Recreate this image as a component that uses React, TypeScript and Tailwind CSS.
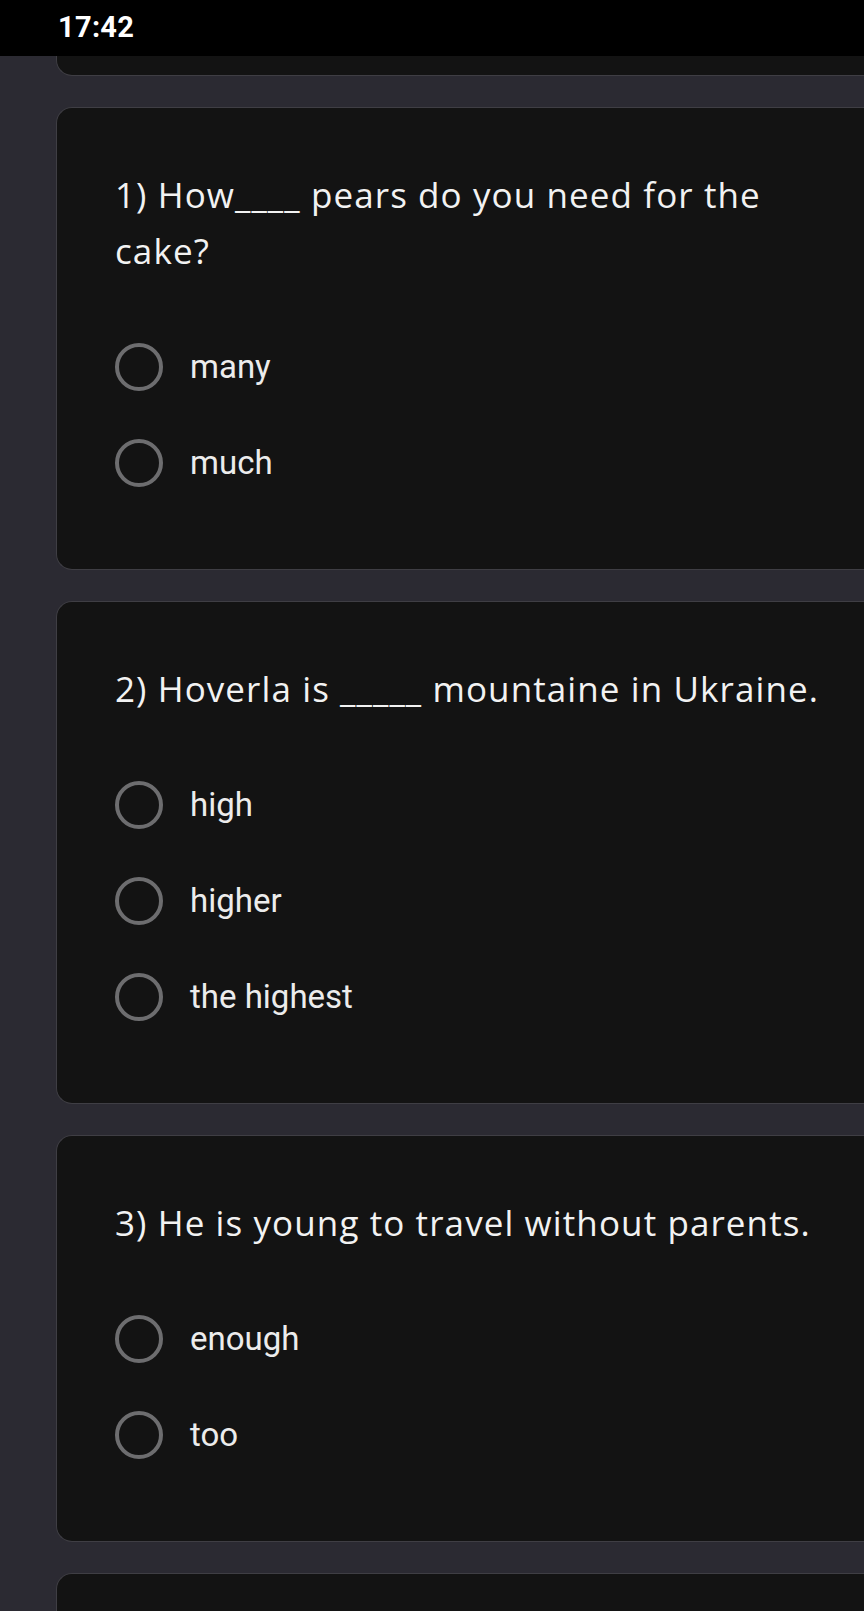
const questions = [
  {
    text: '1) How____ pears do you need for the cake?',
    options: ['many', 'much'],
  },
  {
    text: '2) Hoverla is _____ mountaine in Ukraine.',
    options: ['high', 'higher', 'the highest'],
  },
  {
    text: '3) He is young to travel without parents.',
    options: ['enough', 'too'],
  },
]

function Radio() {
  return <div className="h-12 w-12 shrink-0 rounded-full border-[4.5px] border-[#6d6d6f]" />
}

function QuestionCard({ text, options }: { text: string; options: string[] }) {
  return (
    <div className="rounded-l-2xl border border-r-0 border-[#3f3e44] bg-[#131313] pl-[58px] pr-[24px] pt-[59px] pb-[58px]">
      <div className="font-['Open_Sans',sans-serif] text-[35px] leading-[56px] text-[#f2f2f2] tracking-[1.1px]">
        {text}
      </div>
      <div className="mt-[40px] flex flex-col">
        {options.map((o) => (
          <div key={o} className="flex h-24 items-center gap-[27px]">
            <Radio />
            <span className="font-['Roboto',sans-serif] text-[33px] text-[#ececec]">{o}</span>
          </div>
        ))}
      </div>
    </div>
  )
}

export default function App() {
  return (
    <div className="min-h-[1611px] bg-[#2b2a32] font-['Roboto',sans-serif]">
      <div className="flex h-14 items-center bg-black pl-[58px]">
        <span className="text-[29px] font-bold tracking-[0.3px] text-white">17:42</span>
      </div>
      <div className="flex flex-col gap-[31px] pl-14">
        <div className="h-5 rounded-bl-2xl border-b border-l border-[#3f3e44] bg-[#131313]" />
        {questions.map((q) => (
          <QuestionCard key={q.text} text={q.text} options={q.options} />
        ))}
        <div className="h-10 rounded-tl-2xl border-l border-t border-[#3f3e44] bg-[#131313]" />
      </div>
    </div>
  )
}
